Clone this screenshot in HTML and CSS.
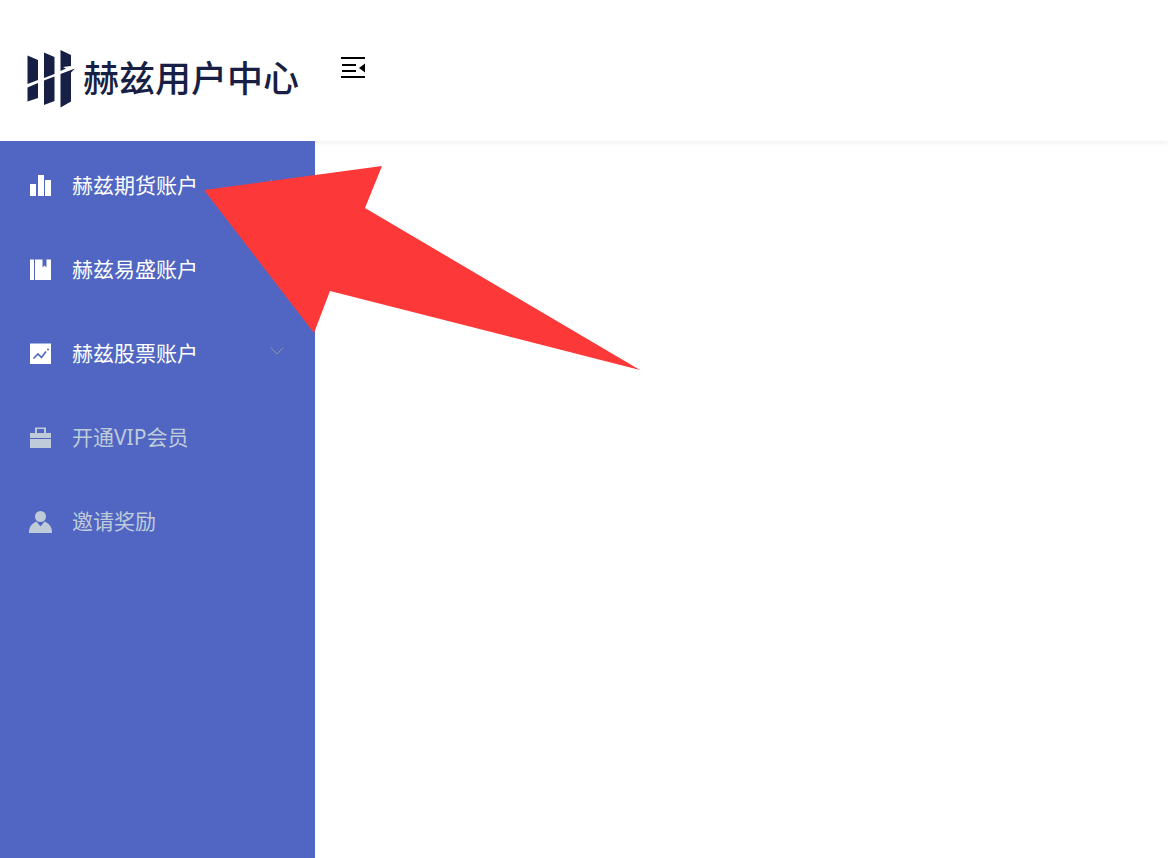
FILE: index.html
```html
<!DOCTYPE html>
<html lang="zh-CN">
<head>
<meta charset="utf-8">
<title>赫兹用户中心</title>
<link rel="stylesheet" href="styles.css">
</head>
<body>
<header class="header">
  <a class="logo" href="#">
    <svg class="logo-mark" viewBox="0 0 50 60" aria-hidden="true">
      <path d="M1.500 7.500L12 12v20L1.500 36zM1.500 39.500L12 35v15L1.500 53.500zM18 4.500L28.500 9v17L18 30zM18 32.500l10.500-4V53L18 57zM34.500 2L45 7v11l-8 1 3 1.500-5.500 2.500zM34.500 26L49 20.500l-4 4v29l-10.500 6z"/>
    </svg>
    <span class="logo-text">赫兹用户中心</span>
  </a>
  <button class="toggle" type="button" aria-label="收起菜单">
    <svg viewBox="0 0 24 22"><path d="M0 0h24v2H0zM1 7h14v2H1zM1 13h14v2H1zM0 19h24v2H0zM24 6.500v9L18 11z"/></svg>
  </button>
</header>
<div class="layout">
  <nav class="sidebar">
    <button class="item" type="button">
      <svg class="icon" viewBox="0 0 22 22"><path d="M0 9h6v12H0zM8 0h6v21H8zM15 5h6v16h-6z"/></svg>
      <span class="label">赫兹期货账户</span>
      <svg class="chevron" viewBox="0 0 14 8"><path d="M.5.500l6.500 6.500 6.500-6.500"/></svg>
    </button>
    <button class="item" type="button">
      <svg class="icon" viewBox="0 0 22 22"><path d="M0 .5h4v20.500H0zM5 .5h7.500V8.500l2-2 2 2V.5H21V21H5z"/></svg>
      <span class="label">赫兹易盛账户</span>
      <svg class="chevron" viewBox="0 0 14 8"><path d="M.5.500l6.500 6.500 6.500-6.500"/></svg>
    </button>
    <button class="item" type="button">
      <svg class="icon" viewBox="0 0 22 22"><path d="M0 .5h21V21H0z"/><path class="cut" d="M3.500 15.500L8 11l3.500 3.500L16 8.500M17 6.500h2"/></svg>
      <span class="label">赫兹股票账户</span>
      <svg class="chevron" viewBox="0 0 14 8"><path d="M.5.500l6.500 6.500 6.500-6.500"/></svg>
    </button>
    <a class="item muted" href="#">
      <svg class="icon" viewBox="0 0 22 22"><path fill-rule="evenodd" d="M0 6h5V.5h11V6h5v5H0zM7 2v4h7V2zM0 12h21v9H0z"/></svg>
      <span class="label">开通VIP会员</span>
    </a>
    <a class="item muted" href="#">
      <svg class="icon" viewBox="0 0 22 22"><ellipse cx="10.500" cy="5.500" rx="5.500" ry="5.500"/><path d="M-1 22c0-6 2-9 7.500-11.500L10.500 15.500l4-5C20 13 22 16 22 22z"/></svg>
      <span class="label">邀请奖励</span>
    </a>
  </nav>
  <main class="content"></main>
</div>
<svg class="pointer" viewBox="0 0 436 204" aria-hidden="true"><path d="M0 24L178 0l-17 42 275 162-310-79-16 42z"/></svg>
</body>
</html>
```
FILE: styles.css
```css
* {
  box-sizing: border-box;
}

body {
  position: relative;
  display: flex;
  flex-direction: column;
  min-height: 100vh;
  margin: 0;
  background: #fff;
  font-family: "Noto Sans", "Noto Sans CJK SC", sans-serif;
}

.header {
  display: flex;
  align-items: flex-start;
  height: 141px;
  padding: 48px 26px 0;
  box-shadow: 0 1px 6px rgba(0, 21, 41, 0.08);
}

.logo {
  display: flex;
  align-items: flex-start;
  gap: 7px;
  width: 315px;
  color: #171f45;
  text-decoration: none;
}

.logo-mark {
  width: 50px;
  height: 60px;
  fill: currentColor;
}

.logo-text {
  font-family: "Noto Sans CJK SC", sans-serif;
  font-size: 36px;
  font-weight: 500;
  line-height: 56px;
  white-space: nowrap;
}

.toggle {
  padding: 9px 0;
  border: 0;
  background: none;
}

.toggle svg {
  display: block;
  width: 24px;
  height: 22px;
}

.layout {
  position: relative;
  display: flex;
  flex: 1;
}

.sidebar {
  width: 315px;
  padding-top: 3px;
  background: #5066c2;
}

.item {
  display: flex;
  align-items: center;
  width: 100%;
  height: 84px;
  padding: 0 31px 0 30px;
  border: 0;
  background: none;
  color: #fff;
  font-family: inherit;
  font-size: 21px;
  font-weight: 400;
  text-align: left;
  text-decoration: none;
}

.muted {
  color: #bfcbd9;
}

.icon {
  width: 22px;
  height: 22px;
  margin-right: 20px;
  overflow: visible;
  fill: currentColor;
}

.cut {
  fill: none;
  stroke: #5066c2;
  stroke-width: 1.6;
}

.label {
  flex: 1;
  padding-bottom: 2px;
  line-height: 30px;
}

.chevron {
  width: 14px;
  height: 8px;
  margin-bottom: 6px;
  fill: none;
  stroke: #909399;
}

.content {
  flex: 1;
}

.pointer {
  position: absolute;
  top: 166px;
  left: 204px;
  width: 436px;
  height: 204px;
  fill: #fc3938;
}
```
